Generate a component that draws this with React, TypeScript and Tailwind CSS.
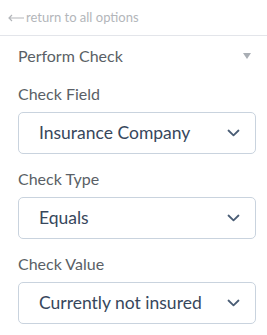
import React from "react";

function Chevron() {
  return (
    <svg width="13" height="8" viewBox="0 0 13 8" className="shrink-0">
      <path d="M1.5 1.5 L6.5 6.3 L11.5 1.5" fill="none" stroke="#4a5d75" strokeWidth="1.8" strokeLinecap="round" strokeLinejoin="round" />
    </svg>
  );
}

function Field({ label, value }: { label: string; value: string }) {
  return (
    <div className="flex flex-col">
      <div className="h-[36px] flex items-center text-[16px] text-[#5a5f66]">{label}</div>
      <div className="h-[42px] rounded-[5px] border border-[#c9d3de] bg-white flex items-center justify-between pl-[20px] pr-[15px] text-[17.5px] text-[#37475c]">
        <span>{value}</span>
        <Chevron />
      </div>
    </div>
  );
}

export default function App() {
  return (
    <div className="w-[267px] h-[335px] bg-white overflow-hidden" style={{ fontFamily: "Lato, 'Open Sans', sans-serif" }}>
      <div className="h-[36px] flex items-center pl-[8px] text-[13px] text-[#b3b6ba] border-b border-[#e3e5ea]">
        <svg width="16" height="8" viewBox="0 0 16 8" className="mr-[2px]">
          <path d="M16 4 L1 4 M4 1 L1 4 L4 7" fill="none" stroke="#b3b6ba" strokeWidth="1.2" />
        </svg>
        <span>return to all options</span>
      </div>
      <div className="pl-[18px] pr-[11px]">
        <div className="h-[40px] flex items-center justify-between text-[16px] text-[#5a5f66] pr-[5px]">
          <span>Perform Check</span>
          <svg width="8" height="6" viewBox="0 0 8 6"><path d="M0 0 L8 0 L4 6 Z" fill="#a9aeb4" /></svg>
        </div>
        <div className="flex flex-col gap-[7px]">
          <Field label="Check Field" value="Insurance Company" />
          <Field label="Check Type" value="Equals" />
          <Field label="Check Value" value="Currently not insured" />
        </div>
      </div>
    </div>
  );
}
